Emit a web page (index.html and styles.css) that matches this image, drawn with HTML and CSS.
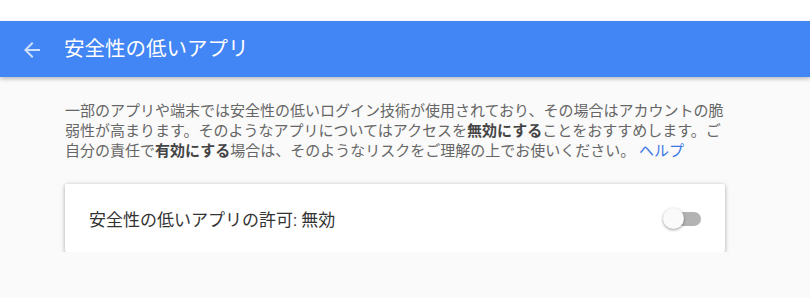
FILE: index.html
```html
<!DOCTYPE html>
<html lang="ja">
<head>
  <meta charset="UTF-8" />
  <meta name="viewport" content="width=device-width, initial-scale=1" />
  <title>安全性の低いアプリ</title>
  <link rel="stylesheet" href="styles.css">
</head>
<body>

  <div class="top-strip"></div>

  <header class="appbar">
    <a class="back" href="#" aria-label="戻る">
      <svg viewBox="0 0 24 24" width="24" height="24" aria-hidden="true">
        <path d="M20 11H7.83l5.59-5.59L12 4l-8 8 8 8 1.41-1.41L7.83 13H20v-2z"/>
      </svg>
    </a>
    <h1>安全性の低いアプリ</h1>
  </header>

  <main class="content">
    <p class="intro">一部のアプリや端末では安全性の低いログイン技術が使用されており、その場合はアカウントの脆弱性が高まります。そのようなアプリについてはアクセスを<strong>無効にする</strong>ことをおすすめします。ご自分の責任で<strong>有効にする</strong>場合は、そのようなリスクをご理解の上でお使いください。 <a href="#">ヘルプ</a></p>

    <div class="card">
      <span class="card-label">安全性の低いアプリの許可: 無効</span>
      <label class="switch">
        <input type="checkbox" />
        <span class="track"></span>
        <span class="thumb"></span>
      </label>
    </div>
  </main>

</body>
</html>
```

FILE: styles.css
```css
* {
  box-sizing: border-box;
}

body {
  margin: 0;
  background-color: #fafafa;
  font-family: Roboto, "Noto Sans CJK JP", sans-serif;
  color: #212121;
}

.top-strip {
  height: 21px;
  background-color: #fff;
}

.appbar {
  height: 56px;
  background-color: #4285f4;
  display: flex;
  align-items: center;
  padding-left: 20px;
  box-shadow: 0 2px 4px rgba(0, 0, 0, 0.25);
  position: relative;
}

.back {
  display: flex;
  width: 24px;
  height: 24px;
  margin-top: 1px;
}
.back svg {
  fill: rgba(255, 255, 255, 0.75);
}

.appbar h1 {
  margin: 0 0 0 20px;
  font-size: 20.5px;
  font-weight: 400;
  color: #fff;
  line-height: 1.2;
}

.content {
  width: 660px;
  margin-left: 65px;
  padding-top: 24px;
}

.intro {
  margin: 0;
  font-size: 15px;
  line-height: 20px;
  color: #666;
}
.intro strong {
  color: #444;
  font-weight: 700;
}
.intro a {
  color: #3b78e7;
  text-decoration: none;
}

.card {
  margin-top: 23px;
  height: 68px;
  background-color: #fff;
  border-radius: 2px;
  box-shadow: 0 1px 4px rgba(0, 0, 0, 0.35);
  display: flex;
  align-items: center;
  justify-content: space-between;
  padding: 0 24px;
}

.card-label {
  font-size: 17px;
  color: #333;
  margin-top: 1px;
}

.switch {
  position: relative;
  width: 38px;
  height: 21px;
  margin-top: 1px;
}
.switch input {
  display: none;
}
.switch .track {
  position: absolute;
  right: 0;
  top: 4px;
  width: 34px;
  height: 14px;
  border-radius: 7px;
  background-color: #b3b3b3;
}
.switch .thumb {
  position: absolute;
  left: 0;
  top: 0;
  width: 21px;
  height: 21px;
  border-radius: 50%;
  background-color: #fafafa;
  box-shadow: 0 1px 3px rgba(0, 0, 0, 0.4);
}
```
